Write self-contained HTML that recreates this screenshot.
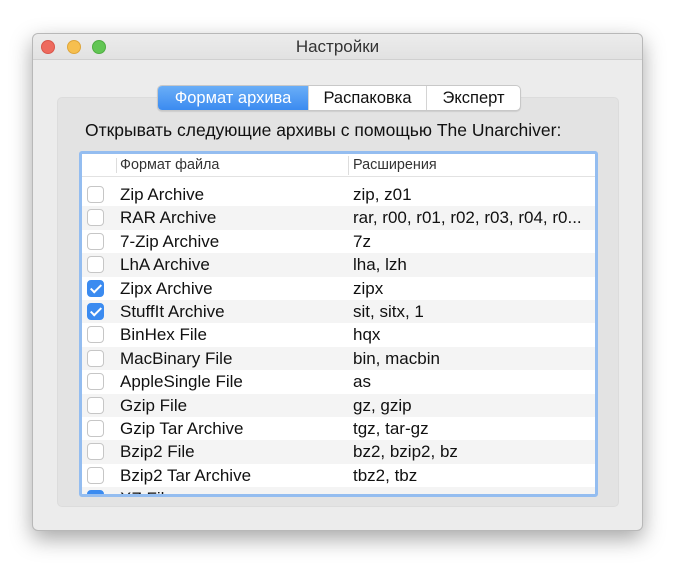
<!DOCTYPE html>
<html><head><meta charset="utf-8"><style>
*{box-sizing:border-box;margin:0;padding:0}
body{width:676px;height:564px;background:#fff;font-family:"Liberation Sans","DejaVu Sans",sans-serif;position:relative;overflow:hidden}
.win{position:absolute;left:32px;top:33px;width:611px;height:498px;background:#ececec;border-radius:6px;border:1px solid #b8b8b8;box-shadow:0 8px 22px rgba(0,0,0,.35)}
.title{position:absolute;left:0;top:0;width:100%;height:26px;background:linear-gradient(#ececec,#e2e2e2);border-bottom:1px solid #d0d0d0;border-radius:6px 6px 0 0;text-align:center;font-size:17px;line-height:26px;color:#333}
.dot{position:absolute;top:6px;width:14px;height:14px;border-radius:50%}
.group{position:absolute;left:24px;top:63px;width:562px;height:410px;background:#e3e3e3;border:1px solid #dcdcdc;border-radius:5px}
.tabs{position:absolute;left:124px;top:51px;height:26px;display:flex;background:#fff;border:1px solid #c8c8c8;border-radius:5px;font-size:16.5px;line-height:24px;box-shadow:0 1px 1px rgba(0,0,0,.1);overflow:hidden;z-index:2}
.tabs div{border-left:1px solid #d4d4d4;color:#111;text-align:center;white-space:nowrap}
.tabs .sel{background:linear-gradient(#6aaef7,#3b8bf0);color:#fff;border-left:none;width:150px}
.label{position:absolute;left:52px;top:86px;font-size:17.5px;color:#111;white-space:nowrap}
.table{position:absolute;left:46px;top:117px;width:519px;height:346px;border:3px solid #94bdf0;border-radius:3px;background:#fff;overflow:hidden}
.hdr{height:23px;border-bottom:1px solid #e2e2e2;font-size:14.4px;color:#333;position:relative;line-height:23px}
.row{height:23.4px;position:relative;font-size:17px;line-height:23.4px;color:#111}
.c1{position:absolute;left:38px;white-space:nowrap}
.c2{position:absolute;left:271px;white-space:nowrap}
.cb{position:absolute;left:5px;top:3px;width:17px;height:17px;border:1px solid #c6c6c6;border-radius:4px;background:#fff}
.cb.on{background:#3b8bf0;border-color:#3b8bf0}
.cb.on::after{content:"";position:absolute;left:5px;top:1px;width:4px;height:9px;border:solid #fff;border-width:0 2px 2px 0;transform:rotate(45deg)}
</style></head><body>
<div class="win">
 <div class="title">Настройки
  <div class="dot" style="left:8px;background:#ee6a5e;border:1px solid #d9564b"></div>
  <div class="dot" style="left:34px;background:#f6bf4f;border:1px solid #dea53a"></div>
  <div class="dot" style="left:59px;background:#62c654;border:1px solid #4fad42"></div>
 </div>
 <div class="group"></div>
 <div class="tabs"><div class="sel">Формат архива</div><div style="width:118px">Распаковка</div><div style="width:94px">Эксперт</div></div>
 <div class="label">Открывать следующие архивы с помощью The Unarchiver:</div>
 <div class="table">
  <div class="hdr"><span style="position:absolute;left:34px;top:4px;height:15px;border-left:1px solid #ddd"></span><span class="c1">Формат файла</span><span style="position:absolute;left:266px;top:2px;height:19px;border-left:1px solid #ddd"></span><span class="c2">Расширения</span></div>
  <div style="height:6px"></div>
  <div>
  <div class="row" style="background:#fff"><div class="cb"></div><span class="c1">Zip Archive</span><span class="c2">zip, z01</span></div>
  <div class="row" style="background:#f4f4f4"><div class="cb"></div><span class="c1">RAR Archive</span><span class="c2">rar, r00, r01, r02, r03, r04, r0...</span></div>
  <div class="row" style="background:#fff"><div class="cb"></div><span class="c1">7-Zip Archive</span><span class="c2">7z</span></div>
  <div class="row" style="background:#f4f4f4"><div class="cb"></div><span class="c1">LhA Archive</span><span class="c2">lha, lzh</span></div>
  <div class="row" style="background:#fff"><div class="cb on"></div><span class="c1">Zipx Archive</span><span class="c2">zipx</span></div>
  <div class="row" style="background:#f4f4f4"><div class="cb on"></div><span class="c1">StuffIt Archive</span><span class="c2">sit, sitx, 1</span></div>
  <div class="row" style="background:#fff"><div class="cb"></div><span class="c1">BinHex File</span><span class="c2">hqx</span></div>
  <div class="row" style="background:#f4f4f4"><div class="cb"></div><span class="c1">MacBinary File</span><span class="c2">bin, macbin</span></div>
  <div class="row" style="background:#fff"><div class="cb"></div><span class="c1">AppleSingle File</span><span class="c2">as</span></div>
  <div class="row" style="background:#f4f4f4"><div class="cb"></div><span class="c1">Gzip File</span><span class="c2">gz, gzip</span></div>
  <div class="row" style="background:#fff"><div class="cb"></div><span class="c1">Gzip Tar Archive</span><span class="c2">tgz, tar-gz</span></div>
  <div class="row" style="background:#f4f4f4"><div class="cb"></div><span class="c1">Bzip2 File</span><span class="c2">bz2, bzip2, bz</span></div>
  <div class="row" style="background:#fff"><div class="cb"></div><span class="c1">Bzip2 Tar Archive</span><span class="c2">tbz2, tbz</span></div>
  <div class="row" style="background:#f4f4f4"><div class="cb on"></div><span class="c1">XZ File</span><span class="c2">xz</span></div>
  </div>
 </div>
</div>
</body></html>
